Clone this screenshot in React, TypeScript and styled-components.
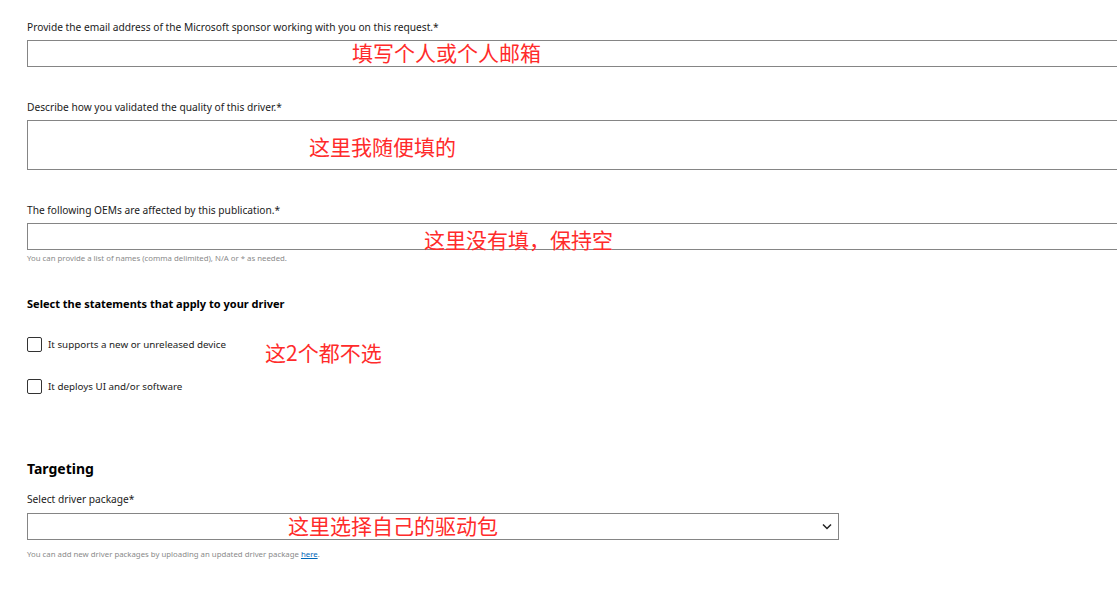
import React from "react";
import styled, { createGlobalStyle } from "styled-components";

const Global = createGlobalStyle`
  html, body { margin: 0; padding: 0; background: #fff; overflow: hidden; }
  body { font-family: "Segoe UI", "Noto Sans", "Open Sans", Arial, sans-serif; color: #1b1b1b; }
`;

const Page = styled.div`
  width: 1117px;
  height: 594px;
  overflow: hidden;
  padding: 20px 0 0 27px;
  box-sizing: border-box;
`;

const Label = styled.div<{ $mt?: number }>`
  font-size: 10.2px;
  line-height: 14px;
  color: #1b1b1b;
  margin-top: ${(p) => p.$mt ?? 0}px;
`;

const Field = styled.div<{ $mt?: number; $w?: number }>`
  position: relative;
  margin-top: ${(p) => p.$mt ?? 6}px;
  width: ${(p) => p.$w ?? 1100}px;
`;

const Box = styled.div<{ $h: number }>`
  height: ${(p) => p.$h}px;
  border: 1px solid #858585;
  box-sizing: border-box;
  background: #fff;
`;

const Help = styled.div<{ $mt?: number }>`
  font-size: 7.8px;
  line-height: 10px;
  color: #8a8a8a;
  margin-top: ${(p) => p.$mt ?? 4}px;
  a { color: #0067b8; text-decoration: underline; }
`;

const Heading = styled.div<{ $mt: number; $size: number }>`
  font-weight: 700;
  font-size: ${(p) => p.$size}px;
  line-height: ${(p) => p.$size + 4}px;
  margin-top: ${(p) => p.$mt}px;
  color: #000;
`;

const CheckRow = styled.label<{ $mt: number }>`
  display: flex;
  align-items: center;
  gap: 6px;
  margin-top: ${(p) => p.$mt}px;
  font-size: 9.8px;
  line-height: 14px;
  color: #1b1b1b;
  position: relative;
`;

const Check = styled.span`
  width: 15px;
  height: 15px;
  border: 1px solid #333;
  border-radius: 2px;
  box-sizing: border-box;
  flex: none;
`;

const Note = styled.span<{ $x: number; $y: number }>`
  position: absolute;
  left: ${(p) => p.$x}px;
  top: ${(p) => p.$y}px;
  font-family: "Noto Sans CJK SC", sans-serif;
  font-size: 21px;
  line-height: 24px;
  color: #ff2b2b;
  white-space: nowrap;
  pointer-events: none;
`;

const SelectBox = styled(Box)`
  display: flex;
  align-items: center;
  justify-content: flex-end;
  padding-right: 6px;
`;

export default function App() {
  return (
    <>
      <Global />
      <Page>
        <Label>Provide the email address of the Microsoft sponsor working with you on this request.*</Label>
        <Field $mt={6}>
          <Box $h={27} />
          <Note $x={325} $y={0}>填写个人或个人邮箱</Note>
        </Field>

        <Label $mt={33}>Describe how you validated the quality of this driver.*</Label>
        <Field $mt={6}>
          <Box $h={50} />
          <Note $x={282} $y={14}>这里我随便填的</Note>
        </Field>

        <Label $mt={33}>The following OEMs are affected by this publication.*</Label>
        <Field $mt={6}>
          <Box $h={27} />
          <Note $x={397} $y={4}>这里没有填，保持空</Note>
        </Field>
        <Help $mt={3}>You can provide a list of names (comma delimited), N/A or * as needed.</Help>

        <Heading $mt={33} $size={11}>Select the statements that apply to your driver</Heading>

        <CheckRow $mt={26}>
          <Check />
          It supports a new or unreleased device
          <Note $x={238} $y={3}>这2个都不选</Note>
        </CheckRow>
        <CheckRow $mt={27}>
          <Check />
          It deploys UI and/or software
        </CheckRow>

        <Heading $mt={66} $size={14}>Targeting</Heading>
        <Label $mt={14}>Select driver package*</Label>
        <Field $mt={7} $w={812}>
          <SelectBox $h={27}>
            <svg width="10" height="7" viewBox="0 0 10 7">
              <path d="M1 1.5 L5 5.5 L9 1.5" fill="none" stroke="#222" strokeWidth="1.5" />
            </svg>
          </SelectBox>
          <Note $x={261} $y={0}>这里选择自己的驱动包</Note>
        </Field>
        <Help $mt={9}>
          You can add new driver packages by uploading an updated driver package <a>here</a>.
        </Help>
      </Page>
    </>
  );
}
